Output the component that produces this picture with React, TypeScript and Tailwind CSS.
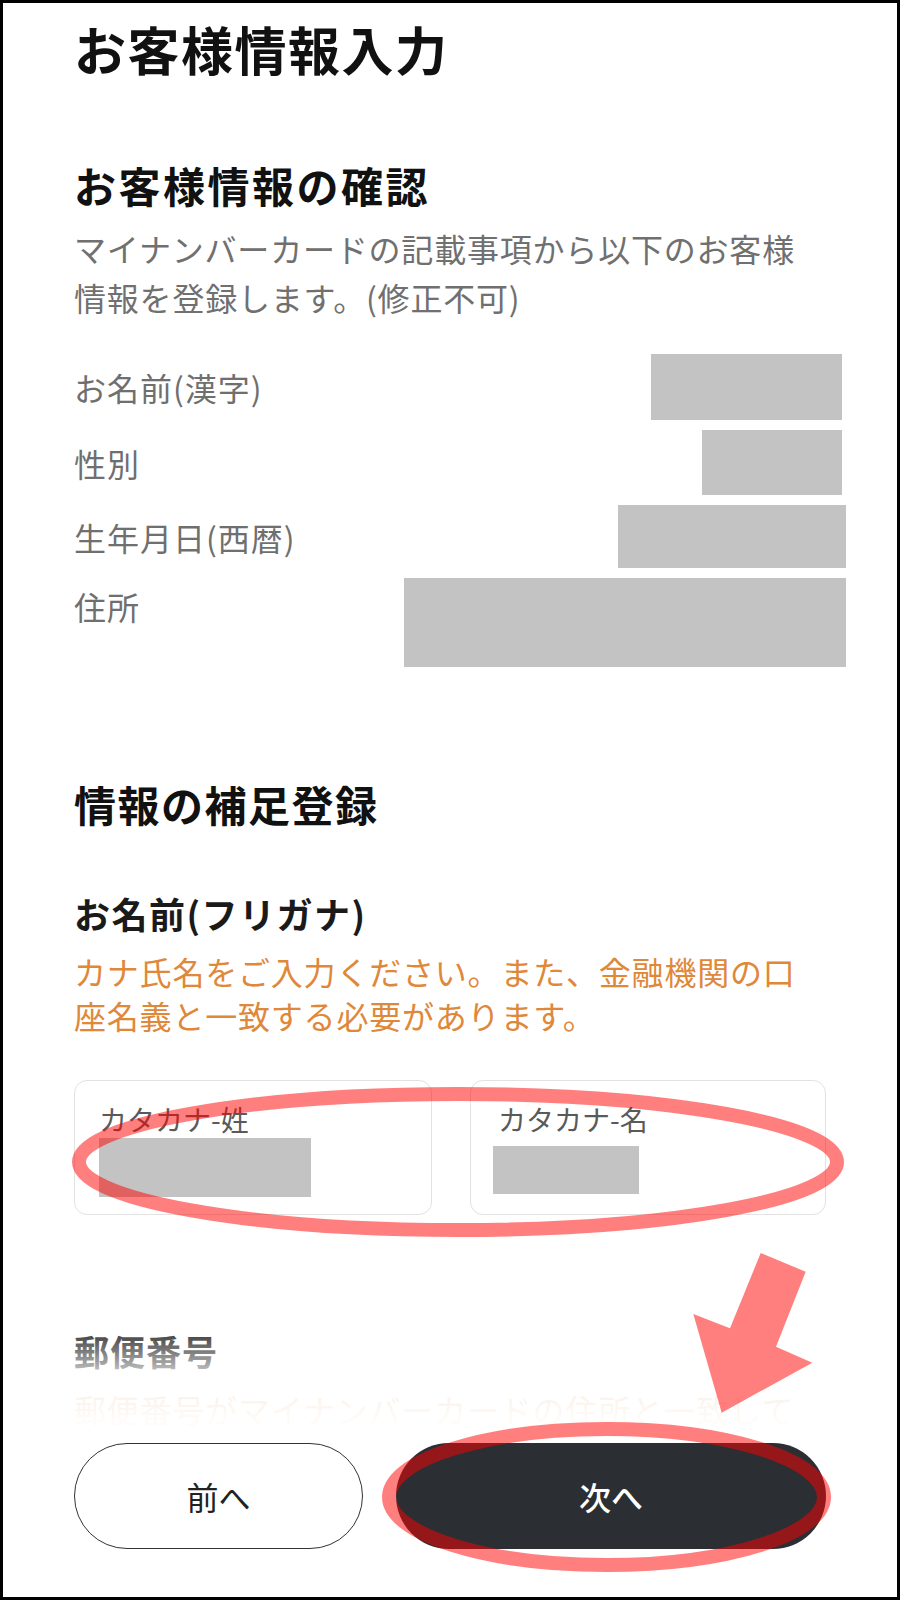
import React from 'react';

type InfoRow = {
  label: string;
  rowH: string;
  boxW: string;
  boxH: string;
  boxMr: string;
  top?: boolean;
};

const rows: InfoRow[] = [
  { label: 'お名前(漢字)', rowH: 'h-[66px]', boxW: 'w-[191px]', boxH: 'h-[66px]', boxMr: '-mr-[16px]' },
  { label: '性別', rowH: 'h-[65px]', boxW: 'w-[140px]', boxH: 'h-[65px]', boxMr: '-mr-[16px]' },
  { label: '生年月日(西暦)', rowH: 'h-[63px]', boxW: 'w-[228px]', boxH: 'h-[63px]', boxMr: '-mr-[20px]' },
  { label: '住所', rowH: 'h-[89px]', boxW: 'w-[442px]', boxH: 'h-[89px]', boxMr: '-mr-[20px]', top: true },
];

function Annotations() {
  // hand-drawn red marks on top of the screenshot
  return (
    <svg
      className="pointer-events-none absolute left-0 top-0"
      width={900}
      height={1600}
      viewBox="0 0 900 1600"
    >
      <ellipse cx={458} cy={1162} rx={379} ry={68} fill="none" stroke="#ff0000" strokeOpacity={0.5} strokeWidth={14} />
      <ellipse cx={606.5} cy={1497} rx={217.5} ry={68} fill="none" stroke="#ff0000" strokeOpacity={0.5} strokeWidth={14} />
      <polygon
        points="760.7,1253 805.7,1271.7 776,1346.7 812.3,1362.7 721.7,1412.7 693.3,1314 730,1328.3"
        fill="#ff0000"
        fillOpacity={0.5}
      />
    </svg>
  );
}

export default function App() {
  return (
    <div
      className="relative w-[900px] h-[1600px] bg-white overflow-hidden"
      style={{ fontFamily: '"Noto Sans CJK JP", "Noto Sans", sans-serif' }}
    >
      <div className="w-full h-full border-[3px] border-black flex flex-col pl-[71px] pr-[71px] pt-[15px]">
        <h1 className="text-[52px] leading-[62px] font-bold text-[#111] tracking-[1.5px]">お客様情報入力</h1>

        {/* お客様情報の確認 */}
        <h2 className="mt-[79px] text-[42px] leading-[52px] font-bold text-[#111] tracking-[2.5px]">お客様情報の確認</h2>
        <p className="mt-[13px] max-w-[740px] text-[32px] leading-[49px] text-[#707070] tracking-[0.8px]">
          マイナンバーカードの記載事項から以下のお客様情報を登録します。(修正不可)
        </p>

        <div className="mt-[32px] flex flex-col gap-[10px]">
          {rows.map((r) => (
            <div
              key={r.label}
              className={`flex justify-between ${r.top ? 'items-start' : 'items-center'} ${r.rowH}`}
            >
              <span className={`text-[32px] leading-[48px] text-[#6f6f6f] tracking-[1px] ${r.top ? 'mt-[4px]' : ''}`}>
                {r.label}
              </span>
              <div className={`${r.boxW} ${r.boxH} ${r.boxMr} bg-[#c3c3c3]`} />
            </div>
          ))}
        </div>

        {/* 情報の補足登録 */}
        <h2 className="mt-[111px] text-[42px] leading-[52px] font-bold text-[#111] tracking-[1.5px]">情報の補足登録</h2>

        <h3 className="mt-[60px] text-[36px] leading-[46px] font-bold text-[#1a1a1a] tracking-[1.5px]">お名前(フリガナ)</h3>
        <p className="mt-[13px] max-w-[740px] text-[32px] leading-[44px] text-[#e0883a] tracking-[0.8px]">
          カナ氏名をご入力ください。また、金融機関の口座名義と一致する必要があります。
        </p>

        <div className="mt-[43px] flex gap-[38px]">
          <div className="flex-1 h-[135px] rounded-[13px] border-[1.5px] border-[#e2e2e2] pl-[24px] pt-[20px]">
            <div className="text-[28px] leading-[36px] text-[#5a5a5a]">カタカナ-姓</div>
            <div className="mt-[1px] w-[212px] h-[59px] bg-[#c3c3c3]" />
          </div>
          <div className="flex-1 h-[135px] rounded-[13px] border-[1.5px] border-[#e2e2e2] pl-[22px] pt-[20px]">
            <div className="text-[28px] leading-[36px] text-[#5a5a5a] ml-[5px]">カタカナ-名</div>
            <div className="mt-[9px] w-[146px] h-[48px] bg-[#c3c3c3]" />
          </div>
        </div>

        {/* 郵便番号 – fades out under the footer */}
        <div className="relative mt-[114px]">
          <h3 className="text-[35px] leading-[44px] font-bold text-[#1a1a1a] tracking-[1px]">郵便番号</h3>
          <p className="mt-[14px] text-[32px] leading-[44px] text-[#e0883a] tracking-[0.8px]">
            郵便番号がマイナンバーカードの住所と一致して
          </p>
          <div className="absolute -left-[10px] -right-[10px] top-0 bottom-0 bg-gradient-to-b from-white/10 via-white/85 to-white" />
        </div>

        <div className="mt-[12px] flex gap-[33px]">
          <button className="flex-[2] h-[106px] rounded-full border-[1.5px] border-[#333] bg-white text-[32px] text-[#222]">
            前へ
          </button>
          <button className="flex-[3] h-[106px] rounded-full bg-[#2b2e33] text-[32px] font-medium text-white">
            次へ
          </button>
        </div>
      </div>

      <Annotations />
    </div>
  );
}
